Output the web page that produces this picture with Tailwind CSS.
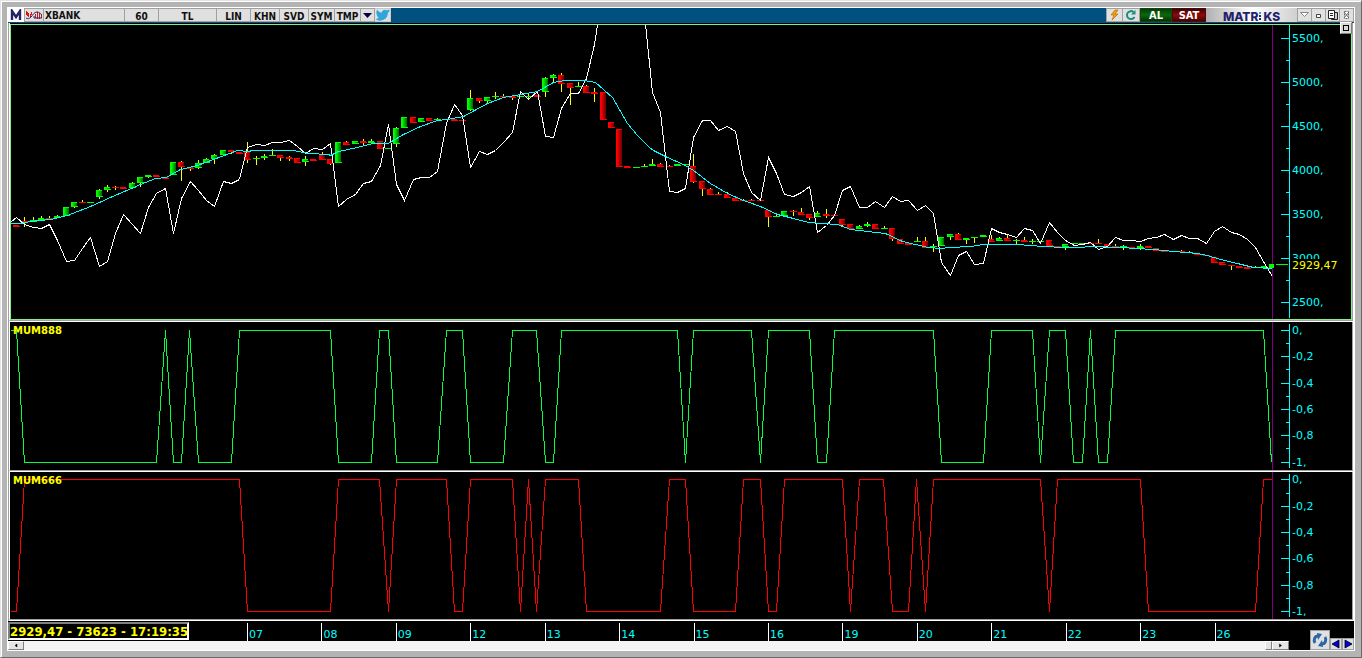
<!DOCTYPE html>
<html lang="tr">
<head>
  <meta charset="UTF-8">
  <meta name="viewport" content="width=device-width, initial-scale=1.0">
  <title>XBANK - Matriks</title>
  <script src="https://cdn.jsdelivr.net/npm/@tailwindcss/browser@4"></script>
</head>
<body class="bg-black font-['DejaVu_Sans',Verdana,sans-serif]">

  <!-- Window frame -->
  <div class="min-h-screen flex flex-col p-[6px] bg-[#b4b4b4] border border-t-[#e4e4e4] border-l-[#e4e4e4] border-r-[#696969] border-b-[#696969] shadow-[inset_1px_1px_0_#fff]">
    <div class="flex-1 flex flex-col min-w-0 border border-white bg-black">

      <!-- Toolbar -->
      <header class="flex items-stretch h-[15px] pb-px bg-[#00517f] text-[10px] leading-[12px] font-bold text-[#111] font-['DejaVu_Sans_Condensed','DejaVu_Sans',sans-serif]">
        <div class="w-4 bg-white flex items-center justify-center">
          <svg class="w-3 h-3" viewBox="0 0 12 12" aria-label="M"><path d="M2 11V2L6 8L10 2V11" fill="none" stroke="#23236b" stroke-width="2.4"/></svg>
        </div>
        <button class="w-5 bg-[#e0e0e0] border border-[#a0a0a0]" aria-label="Grafik tipi">
          <svg class="w-full h-full" viewBox="0 0 18 12">
            <path d="M1.500 2V6M2.500 3V7M3.500 4V8M5.500 5V8M6.500 3V6M10.500 5V9M12.500 3V10M14.500 4V10M16.500 5V9" stroke="#e01010" stroke-width="1"/>
            <path d="M1 9C3 10 4 10 6 8S9 3 12 3S15 5 17 6M9 7V9H17" fill="none" stroke="#23236b"/>
          </svg>
        </button>
        <input type="text" value="XBANK" aria-label="Sembol" class="w-[81px] px-px pt-[2px] bg-[#e0e0e0] border border-[#a0a0a0] border-l-0 outline-none">
        <button class="w-[34px] pt-[2px] bg-[#e0e0e0] border border-[#a0a0a0] border-l-0">60</button>
        <button class="w-[58px] pt-[2px] bg-[#e0e0e0] border border-[#a0a0a0] border-l-0">TL</button>
        <button class="w-[34px] pt-[2px] bg-[#e0e0e0] border border-[#a0a0a0] border-l-0">LIN</button>
        <button class="w-[29px] pt-[2px] bg-[#e0e0e0] border border-[#a0a0a0] border-l-0">KHN</button>
        <button class="w-[29px] pt-[2px] bg-[#e0e0e0] border border-[#a0a0a0] border-l-0">SVD</button>
        <button class="w-[26px] pt-[2px] bg-[#e0e0e0] border border-[#a0a0a0] border-l-0">SYM</button>
        <button class="w-[26px] pt-[2px] bg-[#e0e0e0] border border-[#a0a0a0] border-l-0">TMP</button>
        <button class="w-[14px] bg-[#e0e0e0] border border-[#a0a0a0] border-l-0" aria-label="Menü">
          <svg class="w-full h-full" viewBox="0 0 13 12"><path d="M2 4H11L6.500 9Z" fill="#000040"/></svg>
        </button>
        <button class="w-4 bg-[#e0e0e0] border border-[#c8c8c8] border-l-0" aria-label="Twitter">
          <svg class="w-full h-full" viewBox="0 0 24 22"><path d="M23 4.600a9 9 0 0 1-2.600.7 4.600 4.600 0 0 0 2-2.500 9 9 0 0 1-2.900 1.100 4.500 4.500 0 0 0-7.700 4.100A12.800 12.800 0 0 1 2.500 3.200a4.500 4.500 0 0 0 1.400 6 4.500 4.500 0 0 1-2-.6 4.500 4.500 0 0 0 3.600 4.500 4.500 4.500 0 0 1-2 .1 4.500 4.500 0 0 0 4.200 3.100A9 9 0 0 1 1 18.200 12.800 12.800 0 0 0 20.700 6.800 9 9 0 0 0 23 4.600z" fill="#2fa5dc" stroke="#2fa5dc" stroke-width="2"/></svg>
        </button>

        <div class="flex-1"></div>

        <button class="w-[17px] bg-[#e0e0e0] border border-[#a0a0a0]" aria-label="Hızlı emir">
          <svg class="w-full h-full" viewBox="0 0 15 12"><path d="M8 1L4 6H7L5 11L11 5H8L11 1Z" fill="#f7a100" stroke="#b06000" stroke-width=".6"/></svg>
        </button>
        <button class="w-[17px] bg-[#e0e0e0] border border-[#a0a0a0] border-l-0" aria-label="Yenile">
          <svg class="w-full h-full" viewBox="0 0 15 12"><path d="M11 8A4 4 0 1 1 10 3" fill="none" stroke="#159080" stroke-width="2"/><path d="M12 1V5.500H7.500Z" fill="#159080"/></svg>
        </button>
        <button class="w-8 pt-px bg-linear-to-b from-[#0a3a0a] via-[#0a6a0a] to-[#063006] border border-[#0a4a0a] text-white text-[11px]">AL</button>
        <button class="w-[34px] pt-px bg-linear-to-b from-[#3a0505] via-[#900a0a] to-[#400505] border border-[#500808] text-white text-[11px]">SAT</button>
        <div class="w-[91px] pt-[3px] flex items-center justify-center gap-px bg-linear-to-r from-[#b0b0b0] via-white to-[#d0d0d0] text-[#23236b] text-[12px] font-extrabold font-['Inter',sans-serif]">
          <span>MATR</span>
          <svg class="w-[3px] h-[9px]" viewBox="0 0 3 9"><path d="M0 0H2V2H0Z" fill="#3aa0c8"/><path d="M0 3H2V5H0ZM0 6H2V8H0Z" fill="#23236b"/></svg>
          <span>KS</span>
        </div>
        <button class="w-[15px] bg-[#e0e0e0] border border-[#a0a0a0]" aria-label="Simge">
          <svg class="w-full h-full" viewBox="0 0 13 12"><path d="M2.500 3.500H10.500L6.500 7.500Z" fill="#fff" stroke="#888"/></svg>
        </button>
        <button class="w-[14px] bg-[#e0e0e0] border border-[#a0a0a0] border-l-0" aria-label="Küçült">
          <svg class="w-full h-full" viewBox="0 0 13 12"><path d="M4.500 5.500H8.500V8.500H4.500Z" fill="#fff" stroke="#444"/></svg>
        </button>
        <button class="w-[14px] bg-[#e0e0e0] border border-[#a0a0a0] border-l-0" aria-label="Kopyala">
          <svg class="w-full h-full" viewBox="0 0 13 12"><path d="M5.500 3.500H11.500V10.500H5.500Z" fill="#ccc" stroke="#222"/><path d="M2.500 1.500H8.500V9.500H2.500Z" fill="#fff" stroke="#222"/><path d="M4 4.500H7M4 6.500H7" stroke="#222"/></svg>
        </button>
        <button class="w-[14px] bg-[#e0e0e0] border border-[#a0a0a0] border-l-0" aria-label="Kapat">
          <svg class="w-full h-full" viewBox="0 0 13 12"><path d="M4.500 2.500H8.500V9.500H4.500Z" fill="#fff" stroke="#666" stroke-dasharray="2 1"/><path d="M4 3L9 9M9 3L4 9" stroke="#666"/></svg>
        </button>
      </header>

      <!-- Chart panels -->
      <main class="flex-1 flex flex-col min-h-0 border-l border-l-[#a0a0a0]">
        <section class="relative flex flex-[299_1_0%] min-h-0 border-b border-r border-white">
          <div class="flex-1 flex min-w-0 pt-px border-b border-r border-l border-l-white border-r-[#a0a0a0] border-b-[#a0a0a0]">
            <div class="flex-1 flex min-w-0 border border-[#80f080]">
              <div class="relative flex-1 min-w-0">
                <svg id="price" class="absolute inset-0 w-full h-full" viewBox="11 25 1263 294" preserveAspectRatio="none" shape-rendering="crispEdges">
                  <defs>
                    <linearGradient id="up"><stop offset=".2" stop-color="#00ff00"/><stop offset="1" stop-color="#006400"/></linearGradient>
                    <linearGradient id="down"><stop offset=".2" stop-color="#ff0000"/><stop offset="1" stop-color="#640000"/></linearGradient>
                  </defs>
                </svg>
              </div>
              <svg id="priceAxis" class="w-[77px] h-[294px]" viewBox="1274 25 77 294" font-size="11" shape-rendering="crispEdges"></svg>
            </div>
          </div>
          <button class="absolute top-[-1px] right-px w-3 h-3 bg-[#d8d8d8] border border-t-white border-l-white border-r-[#808080] border-b-[#808080] flex items-center justify-center" aria-label="Paneli büyüt">
            <span class="w-[6px] h-[6px] border border-black"></span>
          </button>
        </section>

        <section class="flex flex-[150_1_0%] min-h-0 border-b border-r border-white">
          <div class="relative flex-1 flex min-w-0 border-b border-r border-l border-l-white border-r-[#a0a0a0] border-b-[#a0a0a0]">
            <div class="relative flex-1 min-w-0">
              <svg id="mum888" class="absolute inset-0 w-full h-full" viewBox="10 322 1264 148" preserveAspectRatio="none" shape-rendering="crispEdges"></svg>
              <h2 class="absolute top-[3px] left-[3px] text-[10px] leading-[12px] font-bold text-[#ffff00]">MUM888</h2>
            </div>
            <svg id="mum888Axis" class="w-[78px] h-[148px]" viewBox="1274 322 78 148" font-size="11" shape-rendering="crispEdges"></svg>
          </div>
        </section>

        <section class="flex flex-[149_1_0%] min-h-0 border-b border-r border-white">
          <div class="relative flex-1 flex min-w-0 border-b border-r border-l border-l-white border-r-[#a0a0a0] border-b-[#a0a0a0]">
            <div class="relative flex-1 min-w-0">
              <svg id="mum666" class="absolute inset-0 w-full h-full" viewBox="10 472 1264 147" preserveAspectRatio="none" shape-rendering="crispEdges"></svg>
              <h2 class="absolute top-[3px] left-[3px] text-[10px] leading-[12px] font-bold text-[#ffff00]">MUM666</h2>
            </div>
            <svg id="mum666Axis" class="w-[78px] h-[147px]" viewBox="1274 472 78 147" font-size="11" shape-rendering="crispEdges"></svg>
          </div>
        </section>
      </main>

      <!-- Time axis + scroll bar -->
      <footer class="flex items-end">
        <div class="flex-1 min-w-0 pr-[21px]">
          <div class="flex h-5 pt-px">
            <div class="w-[181px] h-[18px] border-2 border-t-[#808080] border-l-[#808080] border-r-white border-b-white text-[13px] leading-[16px] font-bold text-[#ffff00] whitespace-nowrap font-['DejaVu_Sans_Condensed','DejaVu_Sans',sans-serif]">2929,47 - 73623 - 17:19:35</div>
            <div class="w-[58px]"></div>
            <div class="flex-1 grid grid-cols-14 pt-px text-[11px] leading-[24px] text-[#00ffff]">
              <span class="h-[18px] border-l border-white pl-px">07</span>
              <span class="h-[18px] border-l border-white pl-px">08</span>
              <span class="h-[18px] border-l border-white pl-px">09</span>
              <span class="h-[18px] border-l border-white pl-px">12</span>
              <span class="h-[18px] border-l border-white pl-px">13</span>
              <span class="h-[18px] border-l border-white pl-px">14</span>
              <span class="h-[18px] border-l border-white pl-px">15</span>
              <span class="h-[18px] border-l border-white pl-px">16</span>
              <span class="h-[18px] border-l border-white pl-px">19</span>
              <span class="h-[18px] border-l border-white pl-px">20</span>
              <span class="h-[18px] border-l border-white pl-px">21</span>
              <span class="h-[18px] border-l border-white pl-px">22</span>
              <span class="h-[18px] border-l border-white pl-px">23</span>
              <span class="h-[18px] border-l border-white pl-px">26</span>
            </div>
          </div>
          <div class="flex h-[9px] bg-[#f4f4f4]">
            <button class="w-4 bg-[#e4e4e4] border border-t-white border-l-white border-r-[#808080] border-b-[#808080]" aria-label="Sola kaydır">
              <svg class="w-full h-full" viewBox="0 0 14 7"><path d="M8 2V5L6 3.500Z" stroke="#000" stroke-width=".5"/></svg>
            </button>
            <div class="flex-1"></div>
            <div class="w-[7px] bg-[#e4e4e4] border border-t-white border-l-white border-r-[#808080] border-b-[#808080]"></div>
            <button class="w-[17px] bg-[#e4e4e4] border border-t-white border-l-white border-r-[#808080] border-b-[#808080]" aria-label="Sağa kaydır">
              <svg class="w-full h-full" viewBox="0 0 14 7"><path d="M6 2V5L8 3.500Z" stroke="#000" stroke-width=".5"/></svg>
            </button>
          </div>
        </div>
        <div class="flex items-end">
          <button class="w-5 h-5 bg-[#e0e0e0] border border-[#a0a0a0]" aria-label="Verileri yenile">
            <svg class="w-full h-full" viewBox="0 0 18 18">
              <path d="M4 12C2 9 4 5 7 5M14 6C16 9 14 13 11 13" fill="none" stroke="#2c66a8" stroke-width="3"/>
              <path d="M6 2L11 3L7 9ZM12 16L7 15L11 9Z" fill="#2c66a8"/>
            </svg>
          </button>
          <button class="w-3 h-3 bg-[#e0e0e0] border border-[#a0a0a0]" aria-label="Önceki">
            <svg class="w-full h-full" viewBox="0 0 10 10"><path d="M8 1V9L1 5Z" fill="#0000e0" stroke="#000" stroke-width=".8"/></svg>
          </button>
          <button class="w-3 h-3 bg-[#e0e0e0] border border-[#a0a0a0]" aria-label="Sonraki">
            <svg class="w-full h-full" viewBox="0 0 10 10"><path d="M2 1V9L9 5Z" fill="#0000e0" stroke="#000" stroke-width=".8"/></svg>
          </button>
        </div>
      </footer>
    </div>
  </div>

  <script>
    const NS = "http://www.w3.org/2000/svg";
    const FIRST_X = 16;
    const STEP = 8.262;

    function add(parent, tag, attrs, text) {
      const el = document.createElementNS(NS, tag);
      for (const key in attrs) el.setAttribute(key, attrs[key]);
      if (text) el.textContent = text;
      parent.appendChild(el);
      return el;
    }

    const barX = (i) => Math.round(FIRST_X + STEP * i);

    function line(svg, points, color) {
      add(svg, "polyline", { points: points.map((p) => p.join(",")).join(" "), fill: "none", stroke: color, transform: "translate(.5 .5)" });
    }

    // direction, body top, body bottom, high, low
    const candles = `
      d225,227 d221,222,217,227 u220,222,217 u218,220,216 d218,219,216 u216,218,215 u207,216 u202,207,202,208 d202,203,200 u202,203
      u190,197,189,199 u187,190,185,192 d187,188,186,190 d187,189 u183,188,182 u177,183,177,187 u175,177,175,178 d175,177 d177,179 u162,175
      d162,167,161,181 d167,169,167,171 u163,168,160,169 u159,163,158 u155,159,154,164 u150,155 d150,152,150,154 d152,154 d152,160,142,163 u158,159,156,165
      u156,158,154,160 u155,156,149 d155,158,155,161 d157,159,156,161 d158,163 u159,162,156,166 d159,161 d154,160,152 d159,164,159,165 u142,163
      d142,145,141 u141,144 d141,143,139,145 u141,143,139 d141,149 u148,149 u128,144,127,147 u117,128 d117,123 u118,122
      d118,121 u119,120,118 u119,120 d119,121 d120,121 u98,110,90,111 d98,101,98,103 u97,101,97,103 u96,97,92,99 d96,97,94
      d96,98,96,100 u96,97 u96,97,94,99 d95,97 u78,92,77,97 u75,78,74,82 d75,84,73,92 d83,88,83,105 u86,87,82 d86,93,85
      d92,94,88,102 d92,120 d122,128 d129,167 d166,168 u167,168 u166,167,164 u164,166,159 d164,167,163 d166,167,165
      u164,166 u164,165 d166,182,154,183 d181,189,181,196 d189,195,188 d194,195,192 d194,198,192 d198,201 d200,201,199 d200,201,199
      d200,201 d210,217,210,227 u216,217,213 u211,216 d211,212,210,216 d212,215,208 d214,218,214,220 u213,217,211 d214,216,209,218 d215,216
      d219,225,219,226 d224,229,224,230 u226,229,225 u224,226,222,227 d224,229 u228,229,226 d228,239,228,241 d239,244 d243,245 u241,242,237
      d241,248,237 u246,247,244,252 u237,246 u234,237,234,240 d234,240,233 u238,240,238,244 u237,238,237,243 u235,237 d239,242,235 u238,241,237
      d238,241,234 u240,241,239,244 d240,242,237 u241,242,239,244 u241,242 d240,246 d246,247 u244,247,244,250 u243,244 u243,244
      d243,244 d243,244,239 d244,246 d246,247,244 u246,247,245,250 d247,248 u246,248,244,250 d246,248 d248,251 d250,252
      d251,252 d251,252,250 u252,253,251 d254,255 d255,256 d257,263 d262,265 d265,266,265,270 d266,268 d267,269
      u267,268,266 u266,268 u264,268
    `.trim().split(/\s+/);

    const momentum = [
      217, 224, 227, 228, 224, 240, 261, 260, 248, 237, 266, 261, 233, 214, 224, 233, 207, 193, 188, 233,
      198, 181, 190, 200, 206, 181, 183, 179, 147, 144, 145, 142, 142, 140, 146, 153, 148, 149, 143, 206,
      199, 194, 183, 181, 165, 124, 184, 200, 179, 177, 177, 171, 123, 104, 115, 167, 151, 154, 150, 142,
      132, 91, 99, 91, 136, 137, 108, 93, 93, 78, 44, -14, -80, -120, -90, -40, 14, 92, 112, 191,
      192, 188, 137, 120, 120, 130, 126, 131, 173, 192, 200, 157, 173, 194, 196, 192, 186, 232, 225, 215,
      190, 186, 207, 207, 201, 207, 196, 201, 200, 210, 205, 213, 262, 275, 255, 251, 264, 263, 228, 232,
      234, 237, 228, 230, 243, 222, 232, 240, 245, 244, 242, 249, 246, 237, 240, 240, 241, 238, 237, 234,
      239, 235, 238, 238, 243, 231, 226, 232, 234, 239, 247, 263, 276
    ];

    const average = [
      [10, 223], [20, 223], [30, 221], [50, 219], [67, 215], [90, 206], [110, 197], [140, 184], [155, 178], [166, 177],
      [180, 169], [197, 165], [213, 159], [237, 150], [247, 151], [253, 150], [293, 150], [308, 153], [328, 154], [330, 155],
      [338, 151], [357, 147], [372, 143], [388, 143], [403, 134], [420, 126], [437, 120], [447, 119], [463, 116], [487, 103],
      [503, 97], [520, 94], [537, 91], [553, 82], [565, 80], [583, 80], [595, 82], [612, 97], [627, 123], [637, 135],
      [649, 147], [653, 150], [667, 157], [683, 164], [693, 170], [710, 183], [727, 193], [743, 200], [760, 206], [777, 214],
      [793, 218], [808, 222], [837, 224], [850, 229], [885, 233], [902, 241], [928, 247], [940, 248], [950, 247], [970, 246],
      [983, 244], [1017, 244], [1043, 246], [1063, 247], [1080, 247], [1090, 246], [1120, 247], [1153, 249], [1173, 251], [1197, 253],
      [1207, 255], [1220, 259], [1237, 263], [1253, 267], [1272, 268]
    ];

    const price = document.getElementById("price");
    candles.forEach((item, i) => {
      const [top, bottom, high = top, low = bottom] = item.slice(1).split(",").map(Number);
      const up = item[0] === "u";
      const x = barX(i);
      if (high < top || low > bottom) add(price, "rect", { x, y: high, width: 1, height: low - high, fill: "#ffff00" });
      if (bottom - top > 1) {
        add(price, "rect", { x: x - 3, y: top, width: 6, height: bottom - top, fill: up ? "url(#up)" : "url(#down)" });
      }
      // open and close edges stick out on opposite sides
      add(price, "rect", { x: x - 3, y: top, width: 6, height: 1, fill: up ? "#00ff00" : "#ff0000" });
      add(price, "rect", { x: x - 2, y: bottom - 1, width: 6, height: 1, fill: up ? "#00ff00" : "#ff0000" });
    });
    line(price, [[10, 222]].concat(momentum.map((y, i) => [barX(i), y])), "#ffffff");
    line(price, average, "#00ffff");
    add(price, "rect", { x: 1272, y: 25, width: 1, height: 294, fill: "#800080" });
    add(price, "rect", { x: 1270, y: 264, width: 4, height: 4, fill: "#00ff00" });

    // Signals flip between 0 and -1 at these x positions
    function signal(id, startHigh, top, bottom, xs, color) {
      const svg = document.getElementById(id);
      let high = startHigh;
      const points = [[10, high ? top : bottom]];
      xs.forEach(([from, to]) => {
        points.push([from, high ? top : bottom]);
        high = !high;
        points.push([to, high ? top : bottom]);
      });
      points.push([1271, high ? top : bottom]);
      line(svg, points, color);
      add(svg, "rect", { x: 1272, y: 300, width: 1, height: 400, fill: "#800080" });
    }

    signal("mum888", true, 330, 462, [
      [16, 24], [156, 165], [165, 173], [181, 189], [189, 198], [231, 239], [330, 338], [371, 379], [388, 396], [437, 446],
      [462, 470], [503, 512], [536, 545], [553, 561], [677, 685], [685, 693], [751, 760], [760, 768], [809, 817], [826, 834],
      [933, 941], [983, 991], [1032, 1040], [1040, 1049], [1065, 1073], [1082, 1090], [1090, 1098], [1107, 1115], [1263, 1271]
    ], "#00ff40");

    signal("mum666", false, 479, 611, [
      [16, 24], [239, 247], [330, 338], [379, 388], [388, 396], [446, 454], [462, 470], [512, 520], [520, 528], [528, 536],
      [536, 545], [578, 586], [660, 669], [685, 693], [735, 743], [760, 768], [776, 784], [842, 850], [850, 859], [883, 892],
      [908, 916], [916, 925], [925, 933], [1040, 1049], [1049, 1057], [1140, 1148], [1255, 1263]
    ], "#ff0000");

    function axis(id, from, to, ticks, minors, labels) {
      const svg = document.getElementById(id);
      add(svg, "rect", { x: 1289, y: from, width: 1, height: to - from, fill: "#00ffff" });
      ticks.forEach((y, i) => {
        add(svg, "rect", { x: 1281, y, width: 8, height: 1, fill: "#00ffff" });
        add(svg, "text", { x: 1292, y: y + 4, fill: "#00ffff" }, labels[i]);
      });
      minors.forEach((y) => add(svg, "rect", { x: 1286, y, width: 3, height: 1, fill: "#00ffff" }));
      return svg;
    }

    const scale = ["0,", "-0,2", "-0,4", "-0,6", "-0,8", "-1,"];
    const priceAxis = axis("priceAxis", 25, 318, [38, 82, 126, 170, 214, 258, 302], [60, 104, 148, 192, 236, 280],
      ["5500,", "5000,", "4500,", "4000,", "3500,", "3000,", "2500,"]);
    axis("mum888Axis", 324, 468, [330, 356, 383, 409, 435, 462], [343, 369, 396, 422, 448], scale);
    axis("mum666Axis", 474, 617, [479, 506, 532, 558, 585, 611], [493, 519, 545, 572, 598], scale);

    // Last price covers the scale label behind it
    add(priceAxis, "rect", { x: 1290, y: 259, width: 50, height: 12, fill: "#000000" });
    add(priceAxis, "rect", { x: 1276, y: 264, width: 12, height: 1, fill: "#00ff00" });
    add(priceAxis, "text", { x: 1292, y: 269, fill: "#ffff00" }, "2929,47");
  </script>
</body>
</html>
